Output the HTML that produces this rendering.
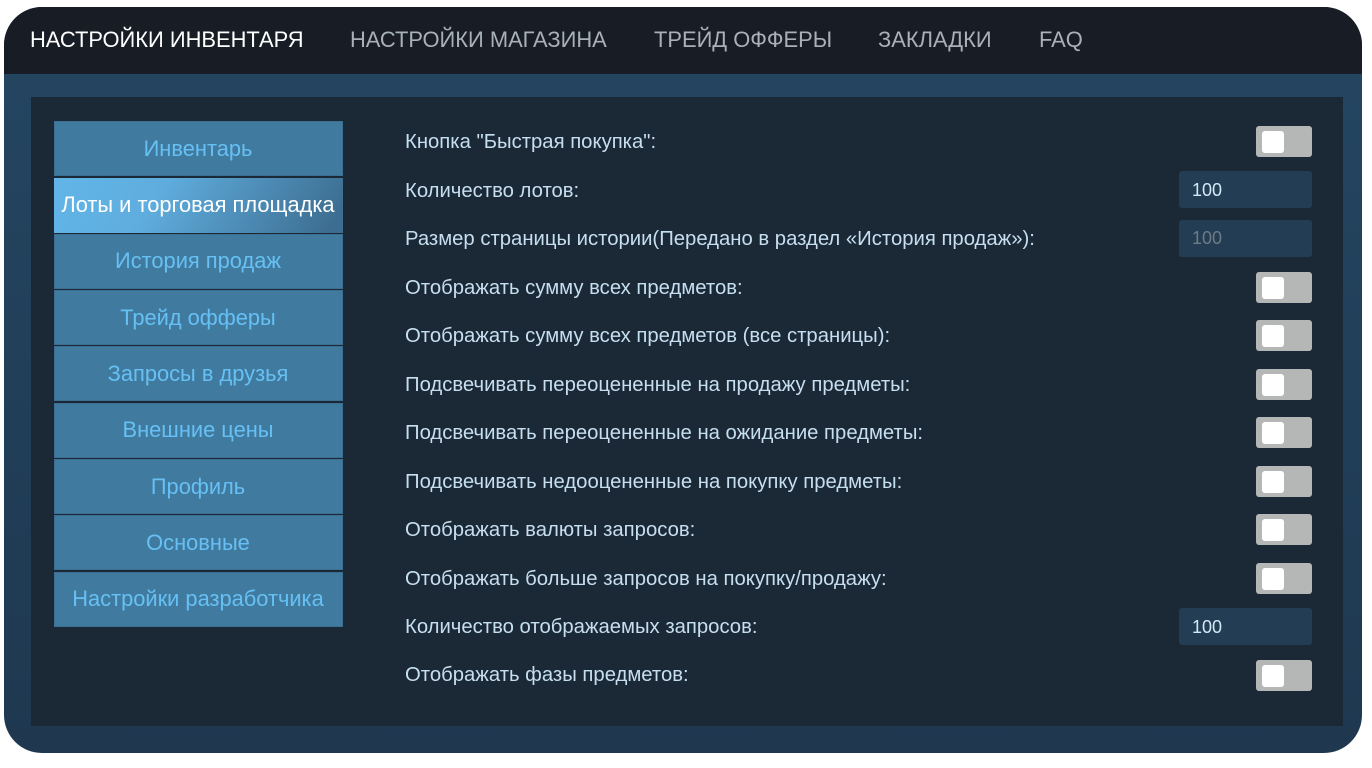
<!DOCTYPE html>
<html lang="ru">
<head>
<meta charset="utf-8">
<title>Настройки</title>
<style>
html,body{margin:0;padding:0;background:#fff;width:1372px;height:768px;overflow:hidden}
body{font-family:"Liberation Sans",Arial,sans-serif;position:relative}
#wrap{position:absolute;left:4px;top:7px;width:1358px;height:746px;border-radius:38px;overflow:hidden;background:linear-gradient(180deg,#244662 0%,#1f3850 100%)}
#head{position:absolute;left:0;top:0;width:100%;height:67px;background:#171c25}
#panel{position:absolute;left:31px;top:97px;width:1312px;height:629px;background:#1b2836}
.nav{position:absolute;top:26px;line-height:28px;font-size:21.9px;color:#a8b1b8;white-space:nowrap}
.nav.on{color:#fff}
.side{position:absolute;left:54px;width:288px;padding-right:1px;height:55px;line-height:55px;background:#417a9f;border:0;color:#66c0f4;font-size:21.85px;text-align:center;white-space:nowrap;box-shadow:inset 0 0 0 1px #3c7092}
.side.on{background:linear-gradient(120deg,#62b5e8 0%,#5fadde 35%,#3d6e91 95%);color:#fff;box-shadow:none;line-height:53px}
.side.up{line-height:53px}
.lab{position:absolute;left:405px;font-size:20.3px;line-height:24px;color:#c6dff0;white-space:nowrap}
.tog{position:absolute;left:1256px;width:56px;height:31px;background:#b5b7b6;border-radius:3px}
.tog i{position:absolute;left:6px;top:5px;width:22px;height:22px;background:#fff;border-radius:3px;display:block}
.inp{position:absolute;left:1179px;width:133px;height:37px;background:#223d54;border-radius:3px;color:#d5e9f5;font-size:18px;line-height:39px;padding-left:13px;box-sizing:border-box}
.inp.dis{color:#6f7b84;line-height:37px}
</style>
</head>
<body>
<div id="wrap"><div id="head"></div></div>
<div id="panel"></div>

<div class="nav on" style="left:30px">НАСТРОЙКИ ИНВЕНТАРЯ</div>
<div class="nav" style="left:350px">НАСТРОЙКИ МАГАЗИНА</div>
<div class="nav" style="left:654px">ТРЕЙД ОФФЕРЫ</div>
<div class="nav" style="left:878px">ЗАКЛАДКИ</div>
<div class="nav" style="left:1039px">FAQ</div>

<div class="side" style="top:121px">Инвентарь</div>
<div class="side on" style="top:178px">Лоты и торговая площадка</div>
<div class="side up" style="top:234px">История продаж</div>
<div class="side" style="top:290px">Трейд офферы</div>
<div class="side" style="top:346px">Запросы в друзья</div>
<div class="side up" style="top:403px">Внешние цены</div>
<div class="side" style="top:459px">Профиль</div>
<div class="side" style="top:515px">Основные</div>
<div class="side up" style="top:572px">Настройки разработчика</div>

<div class="lab" style="top:130px">Кнопка "Быстрая покупка":</div>
<div class="tog" style="top:126px"><i></i></div>
<div class="lab" style="top:179px">Количество лотов:</div>
<div class="inp" style="top:171px">100</div>
<div class="lab" style="top:227px">Размер страницы истории(Передано в раздел «История продаж»):</div>
<div class="inp dis" style="top:220px">100</div>
<div class="lab" style="top:276px">Отображать сумму всех предметов:</div>
<div class="tog" style="top:272px"><i></i></div>
<div class="lab" style="top:324px">Отображать сумму всех предметов (все страницы):</div>
<div class="tog" style="top:320px"><i></i></div>
<div class="lab" style="top:373px">Подсвечивать переоцененные на продажу предметы:</div>
<div class="tog" style="top:369px"><i></i></div>
<div class="lab" style="top:421px">Подсвечивать переоцененные на ожидание предметы:</div>
<div class="tog" style="top:417px"><i></i></div>
<div class="lab" style="top:470px">Подсвечивать недооцененные на покупку предметы:</div>
<div class="tog" style="top:466px"><i></i></div>
<div class="lab" style="top:518px">Отображать валюты запросов:</div>
<div class="tog" style="top:514px"><i></i></div>
<div class="lab" style="top:567px">Отображать больше запросов на покупку/продажу:</div>
<div class="tog" style="top:563px"><i></i></div>
<div class="lab" style="top:615px">Количество отображаемых запросов:</div>
<div class="inp" style="top:608px">100</div>
<div class="lab" style="top:663px">Отображать фазы предметов:</div>
<div class="tog" style="top:660px"><i></i></div>
</body>
</html>
